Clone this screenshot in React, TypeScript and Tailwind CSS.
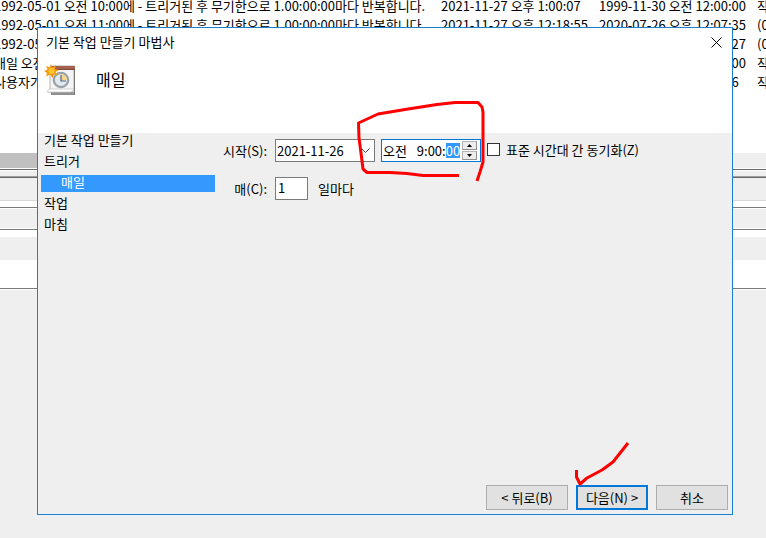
import { useState } from 'react';

const tasks = [
	['1992-05-01 오전 10:00에 - 트리거된 후 무기한으로 1.00:00:00마다 반복합니다.', '2021-11-27 오후 1:00:07', '1999-11-30 오전 12:00:00', '작업'],
	['1992-05-01 오전 11:00에 - 트리거된 후 무기한으로 1.00:00:00마다 반복합니다.', '2021-11-27 오후 12:18:55', '2020-07-26 오후 12:07:35', '(0x0)'],
	['1992-05-01', '', '2021-11-26 오후 12:20:27', '(0x0)'],
	['매일 오전', '', '1999-11-30 오전 12:00:00', '작업'],
	['사용자가', '', '2021-11-26 오전 9:00:16', '작업'],
];

const steps = [
	{ name: '기본 작업 만들기' },
	{ name: '트리거' },
	{ name: '매일', active: true },
	{ name: '작업' },
	{ name: '마침' },
];

const TaskIcon = () => (
	<svg width="34" height="34" viewBox="0 0 34 34" aria-hidden="true">
		<path d="M7 6h24v25H7z" fill="#8f8f8f" />
		<path d="M6 2h24v26H4l2-3z" fill="#f4f4f4" stroke="#b4b4b4" />
		<path d="M5 25l-2 3h24l3-3z" fill="#fff" stroke="#bbb" strokeWidth=".6" />
		<path d="M7 2h24v3H7z" fill="#a5604c" />
		<path d="M7 5h24v1H7z" fill="#7c4839" />
		<path d="M30 6h1v25h-1z" fill="#777" />
		<circle cx="17" cy="16" r="7.2" fill="#e2eaf0" stroke="#98a1a8" strokeWidth="2.2" />
		<path d="M17 16v-6a6 6 0 0 1 6 6z" fill="#f6d58c" />
		<path d="M17 11v6h5" fill="none" stroke="#54616d" strokeWidth="1.2" />
		<path
			d="M7 0l1.500 3.500L12 1l-1 4 4 1-3.500 2L14 11.500l-4-1L8.500 14 6 10.500l-4 2L3 9 0 7l3.500-1.500L2 2l4 1.500z"
			fill="#f59a0b"
		/>
		<circle cx="7.500" cy="7" r="3" fill="#ffc62e" />
	</svg>
);

const Background = () => (
	<div className="overflow-hidden whitespace-nowrap">
		<div className="h-[153px] overflow-hidden bg-white">
			<table className="-mt-1 -ml-1.5 w-[900px] table-fixed">
				<colgroup>
					<col className="w-[447px]" />
					<col className="w-[158px]" />
					<col className="w-[158px]" />
					<col />
				</colgroup>
				<tbody>
					{tasks.map((row, i) => (
						<tr key={i} className="h-[19px]">
							{row.map((cell, j) => (
								<td key={j} className="p-0 leading-[19px]">
									{cell}
								</td>
							))}
						</tr>
					))}
				</tbody>
			</table>
		</div>
		<div className="flex h-[15px]">
			<div className="w-1/2 bg-[#c0c0c0]" />
			<div className="w-1/2" />
		</div>
		<div className="h-[3px] border-y border-white bg-[#696969]" />
		<div className="h-[5px]" />
		<div className="h-0.5 border-t border-[#a0a0a0] bg-[#696969]" />
		<div className="h-[23px] border-b border-[#d9d9d9]" />
		<div className="h-1.5 bg-white" />
		<div className="border-y border-[#7a7a7a]">
			<div className="h-[21px] border-y border-white" />
		</div>
		<div className="h-[7px] bg-white" />
		<div className="h-[23px]" />
		<div className="h-[29px] border-b border-[#7a7a7a] bg-white" />
		<div className="h-px bg-white" />
	</div>
);

const App = () => {
	const [date, setDate] = useState('2021-11-26');
	const [days, setDays] = useState('1');
	const [sync, setSync] = useState(false);
	const stepClass = 'mb-1 h-[17px] leading-[13px]';
	const buttonClass = 'h-[25px] bg-[#e1e1e1] leading-[21px]';
	const spinClass =
		'flex h-[9px] w-[15px] items-center justify-center border border-[#b4b4b4] border-r-[#909090] border-b-[#909090] bg-[#ececec]';

	return (
		<div className="relative min-h-screen overflow-hidden bg-[#efefef] font-['Noto_Sans_CJK_KR',sans-serif] text-[13px] text-black">
			<Background />
			<div
				role="dialog"
				aria-labelledby="title"
				className="absolute top-[27px] right-[33px] bottom-[23px] left-[37px] flex flex-col border border-[#1a80d2] bg-[#efefef]"
			>
				<header className="h-[105px] shrink-0 bg-white">
					<div className="flex h-7 items-center justify-between pr-2.5 pl-2">
						<h1 id="title">기본 작업 만들기 마법사</h1>
						<button aria-label="닫기">
							<svg width="11" height="11" viewBox="0 0 11 11">
								<path d="M.5.5l10 10M10.500.5l-10 10" stroke="#000" />
							</svg>
						</button>
					</div>
					<div className="flex gap-4 pt-2 pl-1.5">
						<TaskIcon />
						<h2 className="pl-0.5 text-base leading-[30px]">매일</h2>
					</div>
				</header>

				<div className="flex grow">
					<ol className="ml-[3px] w-[174px] shrink-0">
						{steps.map(({ name, active }) => (
							<li
								key={name}
								className={`${stepClass} ${active ? 'bg-[#3399ff] pl-5 text-white' : 'pl-[3px]'}`}
							>
								{name}
							</li>
						))}
					</ol>

					<form className="pt-1.5 pl-2 whitespace-nowrap">
						<div className="flex h-[23px] items-center">
							<label htmlFor="start" className="w-11 text-right">
								시작(S):
							</label>
							<div className="ml-2 flex h-full w-[100px] items-center border border-[#7a7a7a] bg-white pr-1 pl-px">
								<input
									id="start"
									value={date}
									onChange={(e) => setDate(e.target.value)}
									className="w-0 grow outline-none"
								/>
								<svg width="9" height="5" viewBox="0 0 9 5">
									<path d="M.5.5l4 4 4-4" fill="none" stroke="#444" />
								</svg>
							</div>
							<div
								role="group"
								aria-label="시작 시간"
								className="ml-1.5 flex h-full w-[100px] items-center justify-between border border-[#0078d7] bg-white pr-[3px] pl-px"
							>
								<span>오전</span>
								<span className="ml-2 flex items-center">
									9:00:
									<span className="bg-[#3399ff] leading-[15px] text-white">00</span>
								</span>
								<div className="flex flex-col gap-px">
									<button type="button" aria-label="위로" className={spinClass}>
										<svg width="5" height="3" viewBox="0 0 5 3">
											<path d="M0 3l2.500-3L5 3z" />
										</svg>
									</button>
									<button type="button" aria-label="아래로" className={spinClass}>
										<svg width="5" height="3" viewBox="0 0 5 3">
											<path d="M0 0l2.500 3L5 0z" />
										</svg>
									</button>
								</div>
							</div>
							<label className="ml-1.5 flex items-center gap-1.5 pb-0.5">
								<input
									type="checkbox"
									checked={sync}
									onChange={(e) => setSync(e.target.checked)}
									className="size-[13px] appearance-none border border-[#333] bg-white checked:bg-[#0078d7]"
								/>
								표준 시간대 간 동기화(Z)
							</label>
						</div>
						<div className="mt-[15px] flex h-[23px] items-center">
							<label htmlFor="every" className="w-11 text-right">
								매(C):
							</label>
							<input
								id="every"
								value={days}
								onChange={(e) => setDays(e.target.value)}
								className="ml-2 h-full w-[33px] border border-[#7a7a7a] bg-white px-0.5 pb-0.5 outline-none"
							/>
							<span className="ml-2.5">일마다</span>
						</div>
					</form>
				</div>

				<footer className="flex justify-end gap-2 pr-1 pb-1">
					<button className={`${buttonClass} w-[82px] border border-[#adadad]`}>
						&lt; 뒤로(B)
					</button>
					<button className={`${buttonClass} w-[72px] border-2 border-[#0078d7]`}>
						다음(N) &gt;
					</button>
					<button className={`${buttonClass} w-[72px] border border-[#adadad]`}>취소</button>
				</footer>
			</div>

			{/* red pen marks */}
			<svg
				className="pointer-events-none absolute top-0 left-0"
				width="766"
				height="538"
				viewBox="0 0 766 538"
				fill="none"
				stroke="#f00"
				strokeWidth="3"
				strokeLinejoin="round"
			>
				<path d="M459 175.500H423L407 173.500 390 172.500H367L363 169 361 153 359 138 358.500 123 378 114 405 109.500 437 104.500 455 102.500H478L482 107 483 112V162L480 172 477 181" />
				<path d="M628 443L613 462 602 470 587 478 580 484 576.500 477V470" />
			</svg>
		</div>
	);
};

export default App;
